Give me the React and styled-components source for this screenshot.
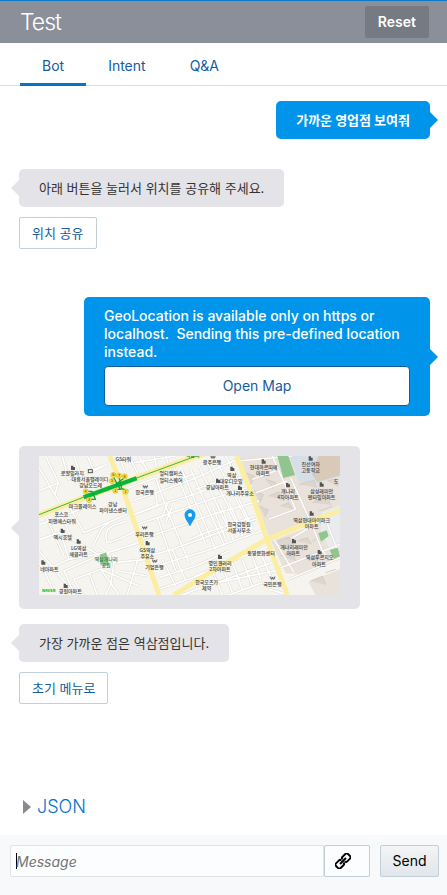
import React, { useState } from "react";
import styled, { createGlobalStyle, css } from "styled-components";

const GlobalStyle = createGlobalStyle`
  * { box-sizing: border-box; }
  body {
    margin: 0;
    background: #ffffff;
    color: #333333;
    font-family: Inter, "Noto Sans CJK KR", sans-serif;
    font-size: 14px;
    line-height: 18px;
  }
  button, input { font: inherit; }
  :lang(ko) { font-size: 13px; }
`;

const Page = styled.div`
  display: flex;
  flex-direction: column;
  min-height: 100vh;
`;

const Header = styled.header`
  display: flex;
  align-items: center;
  justify-content: space-between;
  height: 43px;
  padding: 0 18px 0 20px;
  border-top: 1px solid #0a7cc4;
  background: #8b8f99;
`;

const Title = styled.h1`
  margin: 0;
  color: #ffffff;
  font-size: 23px;
  font-weight: 300;
  line-height: 32px;
  letter-spacing: -1px;
`;

const ResetButton = styled.button`
  height: 32px;
  padding: 0 13px;
  border: 0;
  border-radius: 2px;
  background: #767a82;
  color: #ffffff;
  font-weight: 600;
`;

const Tabs = styled.nav`
  display: flex;
  height: 43px;
  padding: 0 20px;
  border-bottom: 1px solid #d0dfe9;
`;

const Tab = styled.button`
  height: 43px;
  padding: 5px 22px 0;
  border: 0;
  border-bottom: 3px solid ${(p) => (p.$active ? "#0572ce" : "transparent")};
  background: none;
  color: #145c9e;
`;

const Conversation = styled.main`
  display: flex;
  flex: 1;
  flex-direction: column;
  align-items: flex-start;
  padding: 15px 17px 0 19px;
`;

const tail = {
  right: css`
    right: -8px;
    border-left-color: #0095eb;
    border-right-width: 0;
  `,
  left: css`
    left: -8px;
    border-right-color: #e4e3e8;
    border-left-width: 0;
  `,
};

const Bubble = styled.div`
  position: relative;
  max-width: 346px;
  padding: 10px 20px;
  border-radius: 5px;
  background: #e4e3e8;
  white-space: pre-wrap;

  &::after {
    content: "";
    position: absolute;
    top: calc(50% - 8px);
    border: 8px solid transparent;
    ${tail.left}
  }
`;

const UserBubble = styled(Bubble)`
  align-self: flex-end;
  background: #0095eb;
  color: #ffffff;
  font-weight: 500;

  &:lang(ko) { font-weight: 700; }

  &::after {
    border-left-width: 8px;
    border-right-color: transparent;
    left: auto;
    ${tail.right}
  }
`;

const Reply = styled.section`
  display: flex;
  flex-direction: column;
  align-items: flex-start;
  gap: 10px;
  margin-top: ${(p) => p.$gap}px;
`;

const LocationBubble = styled(UserBubble)`
  margin-top: 48px;
`;

const ActionButton = styled.button`
  height: 32px;
  padding: 0 12px;
  border: 1px solid #c0cfd8;
  border-radius: 2px;
  background: #ffffff;
  color: #145c9e;
`;

const OpenMapButton = styled.button`
  display: block;
  width: 100%;
  height: 40px;
  margin-top: 5px;
  border: 1px solid #145c9e;
  border-radius: 4px;
  background: #ffffff;
  color: #145c9e;
  font-weight: 400;
`;

const MapBubble = styled(Bubble)`
  max-width: 341px;
  width: 100%;
  margin-top: 30px;
  padding-bottom: 14px;
`;

const MapDrawing = styled.svg`
  display: block;
  width: 100%;
  height: auto;
  font-family: "Noto Sans CJK KR", sans-serif;
  font-size: 15px;
  font-weight: 500;
`;

const JsonToggle = styled.button`
  display: flex;
  align-items: center;
  gap: 6px;
  margin: auto 0 15px 4px;
  padding: 0;
  border: 0;
  background: none;
  color: #0572ce;
  font-size: 18px;
  font-weight: 300;
  line-height: 26px;
`;

const Composer = styled.form`
  display: flex;
  height: 60px;
  padding: 10px 8px 18px 10px;
  background: #f7f9fb;
`;

const MessageInput = styled.input`
  flex: 1;
  min-width: 0;
  height: 32px;
  padding: 0 5px;
  border: 1px solid #dfe4e7;
  border-radius: 2px 0 0 2px;
  background: #fcfdfe;
  outline: none;

  &:focus:placeholder-shown {
    background: linear-gradient(#000000, #000000) 5px center / 1px 16px no-repeat #fcfdfe;
    caret-color: transparent;
  }

  &::placeholder {
    color: #737373;
    font-style: italic;
    opacity: 1;
  }
`;

const LinkButton = styled.button`
  display: flex;
  align-items: center;
  width: 46px;
  height: 32px;
  padding: 0 10px;
  border: 1px solid #c0cfd8;
  border-radius: 2px;
  background: #fcfdfe;
`;

const SendButton = styled.button`
  width: 59px;
  height: 32px;
  margin-left: 10px;
  padding: 0;
  border: 1px solid #c0cfd8;
  border-radius: 2px;
  background: linear-gradient(#f3f5f6, #e1e6ea);
  color: #000000;
`;

const streets = [
  "M0 35 L65 145 M20 0 L58 80 L48 115 M58 80 L0 105 M70 0 L88 70 L190 30 M105 0 L125 60 M145 0 L165 45 L205 25",
  "M260 55 L240 0 M300 60 L270 0 M300 0 L328 48 M345 0 L355 42 M380 0 L390 32 M285 20 L410 0",
  "M0 205 L50 190 L125 160 M20 180 L75 300 M60 165 L100 250 L185 300 M90 150 L135 230 L205 200 L265 175",
  "M0 250 L65 230 L90 310 L0 350 M0 285 L95 400 M45 410 L18 350 L0 320 M90 310 L205 290 L300 260",
  "M100 400 L75 345 L175 300 M130 417 L105 370 L185 340 L240 417 M150 350 L175 417 M185 340 L300 390",
  "M160 275 L188 218 L210 200 M180 270 L205 290 L185 340 M205 260 Q192 225 220 210 L262 195 M205 260 L250 245 L300 220",
  "M205 290 L225 320 L215 385 L200 417 M225 320 L325 310 M295 315 L265 417 M325 360 L240 345",
  "M270 95 L350 65 M280 135 L350 110 L355 150 L290 175 M350 110 L465 68 L590 12 M350 65 L380 150 L450 320",
  "M285 175 L350 150 L450 120 L560 80 L620 60 M295 205 L355 185 L500 135 L640 90 M355 185 L410 345",
  "M310 250 L365 230 L530 172 L660 135 M330 300 L400 280 L650 190 M340 335 L400 315 L500 285",
  "M405 35 L500 265 M430 45 L530 280 M455 40 L555 265 M480 30 L585 255 M505 20 L610 240 M530 10 L640 225 M560 0 L595 70",
  "M385 85 L460 55 M470 100 L580 60 M520 150 L560 250 M545 145 L580 240 M570 140 L610 230 M600 130 L640 215",
  "M360 365 L470 330 L570 285 M360 400 L450 370 L510 345 M410 390 L370 310 M440 375 L400 280",
  "M390 135 L365 190 M400 150 L380 200 M455 250 L500 230 L650 180 M500 285 L680 220",
  "M470 360 L690 270 M480 400 L710 315 M520 345 L550 417 M550 330 L580 410 M580 320 L610 400 M610 310 L640 390 M640 300 L665 370 M665 290 L700 375",
  "M430 417 L510 385 L730 340 M570 417 L670 380 M690 400 L750 417",
];

const estateStreets = [
  "M600 15 L760 0 M700 0 L770 160 L690 190 M755 65 L820 210 M640 70 L710 45 M650 110 L745 75",
  "M725 335 L903 265 M820 210 L850 285 L875 310 M820 210 L760 245 M750 370 L903 305",
  "M705 250 L765 350 M865 205 L903 300",
];

const buildings = [
  "M622 50l25 12l-12 22M645 105l28 10l-10 24M660 150l28 12l-10 20M690 120l30 -12l12 25M680 70l30 10l-10 18M725 150l24 -10l12 20",
  "M780 85l45 -12l8 22M820 140l42 -14l14 20M865 75l22 -6l10 24M840 165l40 -14M830 120l30 -10l8 12",
  "M715 255l35 -12l12 24l-30 12zM775 255l30 -10l12 20M725 300l32 -12l14 28M790 310l36 -12l10 20M820 255l20 -8M750 325l32 -12M815 375l35 -14l10 25M860 350l30 -10",
];

const labels = [
  [253, 14, "GS타워"], [100, 57, "로얄빌라지"], [153, 75, "대륭서울팰레이디"], [155, 93, "강남오드레"],
  [396, 58, "멀티캠퍼스"], [396, 77, "멀티스퀘어"], [317, 114, "한국은행"], [131, 157, "마크플레이스"],
  [221, 150, "강남"], [222, 168, "파이낸스센터"], [67, 181, "포스코"], [69, 200, "피앤에스타워"],
  [519, 25, "광주은행"], [578, 63, "역삼"], [576, 82, "대우디오빌"], [535, 100, "경남아파트"], [603, 118, "개나리주유소"],
  [674, 40, "현대까르띠에"], [672, 58, "아파트"], [815, 31, "진선여자"], [815, 49, "고등학교"],
  [747, 112, "개나리"], [747, 130, "4차아파트"], [848, 110, "삼성래미안"], [848, 128, "펜타빌아파트"], [892, 80, "도"],
  [818, 197, "역삼현대아이파크"], [818, 215, "아파트"], [600, 210, "한국감정원"], [600, 228, "서울사무소"],
  [71, 249, "엑시호텔"], [119, 282, "LG역삼"], [119, 300, "에클라트"], [316, 239, "우리은행"],
  [325, 287, "GS역삼"], [325, 305, "주유소"], [346, 339, "기업은행"], [31, 345, "네아파트"], [94, 412, "경원아파트"],
  [666, 296, "동영문화센터"], [765, 279, "개나리래미안"], [763, 298, "아파트"], [842, 308, "역삼푸르지오"], [840, 331, "아파트"],
  [543, 327, "명인갤러리"], [543, 345, "2차아파트"], [700, 389, "국민은행"], [503, 383, "한국오츠카"], [503, 401, "제약"],
];

const exits = [[140, 106, 4], [150, 132, 3], [223, 57, 6], [240, 59, 7], [257, 61, 8], [219, 75, 5], [229, 104, 2], [260, 107, 1]];

const blocks = [[102, 35], [674, 16], [580, 38], [747, 87], [848, 85], [818, 172], [119, 256], [13, 319], [80, 389], [543, 302], [765, 255], [842, 288], [815, 7], [537, 74], [603, 95], [71, 224], [326, 261]];

const banks = [[319, 92], [317, 215], [347, 315], [701, 366], [522, 3]];

function LocationMap() {
  return (
    <MapDrawing viewBox="0 0 903 417" role="img" aria-label="역삼점 위치 지도">
      <rect width="903" height="417" fill="#f5f4ee" />
      <path d="M600 0H903V170L690 242ZM695 255L903 178V417H830L795 355L740 352Z" fill="#e9e2da" />
      <path d="M742 368L903 305V340L790 385L800 417H750Z" fill="#f5f4ee" />
      <path d="M752 0H903V60L835 82L780 78Z" fill="#d6dfe8" />
      <path d="M838 0H903V58L835 78L818 55Z" fill="#d8c9b9" />
      <path d="M848 170L903 148V280L875 285L845 222Z" fill="#e9ebee" />
      <g fill="#ddd5ce" stroke="#d5cdc5" strokeWidth="3">
        {buildings.map((d) => <path key={d} d={d} />)}
      </g>
      <g fill="none" strokeLinejoin="round">
        {streets.map((d) => <path key={d} d={d} stroke="#dddbd6" strokeWidth="8" />)}
        {estateStreets.map((d) => <path key={d} d={d} stroke="#d5cfc9" strokeWidth="7" />)}
        {streets.map((d) => <path key={`${d} top`} d={d} stroke="#ffffff" strokeWidth="5" />)}
        {estateStreets.map((d) => <path key={`${d} top`} d={d} stroke="#fdfcfa" strokeWidth="5" />)}
      </g>
      <path d="M715 0H748L768 57L733 66Z M838 232L863 223L869 240L846 257Z M872 282L896 275L903 300L885 309Z M182 296L202 289L210 327L184 326Z" fill="#90c58e" />
      <g fill="none" stroke="#fbeea2" strokeWidth="15">
        <path d="M0 177L130 127L290 67L495 -8" strokeWidth="18" />
        <path d="M212 0L243 75L290 210L360 417" />
        <path d="M592 0L640 120L684 250L745 417" />
        <path d="M405 417L520 345L684 250L903 163" />
      </g>
      <path d="M0 176L135 123L290 67L480 -3" fill="none" stroke="#3fb34f" strokeWidth="3" />
      <path d="M134 124L293 67" stroke="#08b63d" strokeWidth="13" />
      <path d="M145 106h14l10 24h-18M224 65l20 35h-15M240 62l8 36l20 6M257 65l-27 20" fill="none" stroke="#08a83a" strokeWidth="4" />
      {exits.map(([x, y, n]) => (
        <g key={n}>
          <circle cx={x} cy={y} r="8" fill="#f9df40" stroke="#b89c24" />
          <text x={x} y={y + 4} fontSize="11" textAnchor="middle" fill="#4c4420">{n}</text>
        </g>
      ))}
      {blocks.map(([x, y]) => <path key={`${x}-${y}`} d={`M${x - 6} ${y - 6}h7v4h5v9h-12z`} fill="#555555" />)}
      {banks.map(([x, y]) => <path key={`${x}-${y}`} d={`M${x - 7} ${y - 5}l4 10l3 -8l3 8l4 -10M${x - 8} ${y}h16`} fill="none" stroke="#555555" strokeWidth="2" />)}
      <rect x="148" y="41" width="12" height="9" fill="none" stroke="#555555" strokeWidth="3" />
      <g fill="#444444" textAnchor="middle">
        {labels.map(([x, y, name]) => <text key={`${x}-${y}`} x={x} y={y}>{name}</text>)}
        <text x="201" y="315" fill="#397a50">역삼개나리</text>
        <text x="201" y="334" fill="#397a50">공원</text>
        <text x="461" y="4" fill="#16803a">역삼역</text>
      </g>
      <text x="9" y="408" fontSize="12" fontWeight="900" fill="#08c31b">NAVER</text>
      <path d="M453 209C448 195 438 190 438 176A15 15 0 0 1 468 176C468 190 458 195 453 209Z" fill="#129af5" stroke="#129af5" strokeWidth="3" />
      <circle cx="453" cy="177" r="6" fill="#ffffff" />
    </MapDrawing>
  );
}

function ChainIcon() {
  return (
    <svg width="16" height="16" viewBox="0 0 34 34" fill="none" stroke="#000000" strokeWidth="4" aria-hidden="true">
      <g transform="rotate(-45 17 17)">
        <path d="M15 14V13A3 3 0 0 0 12 10H3A4 4 0 0 0 -1 14V20A4 4 0 0 0 3 24H12A3 3 0 0 0 15 21V20" />
        <path d="M19 14V13A3 3 0 0 1 22 10H31A4 4 0 0 1 35 14V20A4 4 0 0 1 31 24H22A3 3 0 0 1 19 21V20" />
        <path d="M8 17H26" />
      </g>
    </svg>
  );
}

const tabs = ["Bot", "Intent", "Q&A"];

export default function App() {
  const [active, setActive] = useState("Bot");
  const [message, setMessage] = useState("");

  return (
    <Page>
      <GlobalStyle />
      <Header>
        <Title>Test</Title>
        <ResetButton type="button">Reset</ResetButton>
      </Header>
      <Tabs aria-label="Test views">
        {tabs.map((name) => (
          <Tab key={name} type="button" $active={name === active} onClick={() => setActive(name)}>{name}</Tab>
        ))}
      </Tabs>
      <Conversation>
        <UserBubble lang="ko">가까운 영업점 보여줘</UserBubble>
        <Reply $gap={30}>
          <Bubble lang="ko">아래 버튼을 눌러서 위치를 공유해 주세요.</Bubble>
          <ActionButton lang="ko" type="button">위치 공유</ActionButton>
        </Reply>
        <LocationBubble>
          {"GeoLocation is available only on https or localhost.  Sending this pre-defined location instead."}
          <OpenMapButton type="button">Open Map</OpenMapButton>
        </LocationBubble>
        <MapBubble><LocationMap /></MapBubble>
        <Reply $gap={15}>
          <Bubble lang="ko">가장 가까운 점은 역삼점입니다.</Bubble>
          <ActionButton lang="ko" type="button">초기 메뉴로</ActionButton>
        </Reply>
        <JsonToggle type="button" aria-expanded="false">
          <svg width="8" height="14" viewBox="0 0 8 14" aria-hidden="true"><path d="M0 0L8 7L0 14Z" fill="#878b8f" /></svg>
          JSON
        </JsonToggle>
      </Conversation>
      <Composer onSubmit={(e) => e.preventDefault()}>
        <MessageInput
          aria-label="Message"
          placeholder="Message"
          autoFocus
          value={message}
          onChange={(e) => setMessage(e.target.value)}
        />
        <LinkButton type="button" aria-label="Attach link"><ChainIcon /></LinkButton>
        <SendButton type="submit">Send</SendButton>
      </Composer>
    </Page>
  );
}
